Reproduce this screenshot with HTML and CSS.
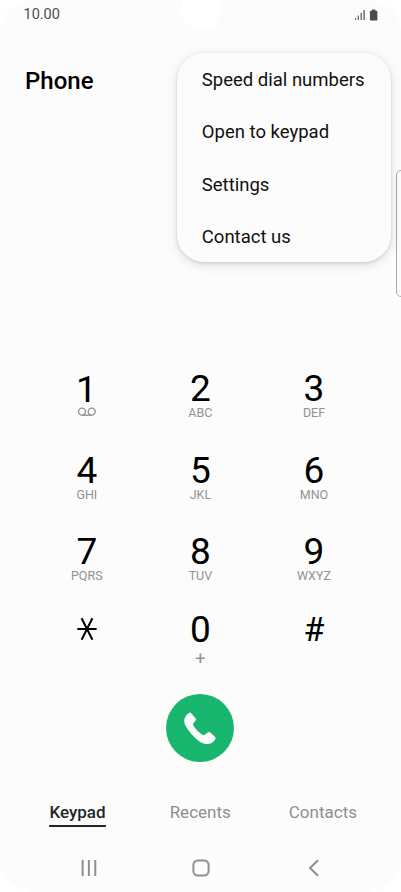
FILE: index.html
```html
<!DOCTYPE html>
<html lang="en">
<head>
<meta charset="utf-8">
<meta name="viewport" content="width=device-width, initial-scale=1">
<title>Phone</title>
<link rel="stylesheet" href="styles.css">
</head>
<body>
<div class="phone">
  <div class="notch"></div>
  <header class="status">
    <span class="clock">10.00</span>
    <svg class="status-icons" width="26" height="14" viewBox="0 0 26 14">
      <g fill="#777"><rect x="1" y="10" width="1.2" height="2"/><rect x="3.6" y="7.5" width="1.4" height="4.5"/><rect x="6.5" y="4.7" width="1.5" height="7.3"/><rect x="9.3" y="2" width="1.6" height="10"/></g>
      <path fill="#4b4b4b" d="M18 1.4h3.400v1.300h1.100q.9 0 .9.9v8q0 .9-.9.9h-5.700q-.9 0-.9-.9v-8q0-.9.9-.9H18z"/>
    </svg>
  </header>
  <h1 class="title">Phone</h1>
  <main class="keypad">
    <div class="key"><span class="digit one">1</span>
      <svg class="voicemail" width="20" height="10" viewBox="0 0 20 10" fill="none" stroke="#929292" stroke-width="1.400"><circle cx="5" cy="4.600" r="3.500"/><circle cx="14.700" cy="4.600" r="3.500"/><path d="M5 8.200h9.700"/></svg>
    </div>
    <div class="key"><span class="digit">2</span><span class="letters">ABC</span></div>
    <div class="key"><span class="digit">3</span><span class="letters">DEF</span></div>
    <div class="key"><span class="digit">4</span><span class="letters">GHI</span></div>
    <div class="key"><span class="digit">5</span><span class="letters">JKL</span></div>
    <div class="key"><span class="digit">6</span><span class="letters">MNO</span></div>
    <div class="key"><span class="digit">7</span><span class="letters">PQRS</span></div>
    <div class="key"><span class="digit">8</span><span class="letters">TUV</span></div>
    <div class="key"><span class="digit">9</span><span class="letters">WXYZ</span></div>
    <div class="key">
      <svg class="star" width="20" height="24" viewBox="0 0 20 24" fill="none" stroke="#000" stroke-width="2"><path d="M.4 12h19.200M4.600 1.200l10.800 21.600M15.400 1.200L4.600 22.800"/></svg>
    </div>
    <div class="key"><span class="digit">0</span><span class="plus">+</span></div>
    <div class="key"><span class="hash">#</span></div>
  </main>
  <button class="call" aria-label="Call">
    <svg width="68" height="68" viewBox="0 0 68 68"><path fill="#fcfcfc" d="M22.800 18.900Q24.100 18.100 25.200 19.200L29.600 24.200Q30.500 25.500 29.500 26.700L26.900 29.900Q27.700 33 31.400 36.800T37.900 41.300L41.500 38.700Q42.900 37.600 44.200 38.600L49.200 43Q50.100 44.200 49.100 45.400Q45.300 51.200 38.500 49.700C33.300 48.500 27.800 43.200 23.200 37.200C19 31.800 17.600 28 18.400 24.700Q19.300 20.800 22.800 18.900Z"/></svg>
  </button>
  <nav class="tabs">
    <span class="tab active">Keypad</span>
    <span class="tab">Recents</span>
    <span class="tab">Contacts</span>
  </nav>
  <footer class="navbar">
    <svg width="20" height="20" viewBox="0 0 20 20" fill="none" stroke="#8e8e8e" stroke-width="2"><path d="M4.600 2v16M10.900 2v16M17.300 2v16"/></svg>
    <svg width="20" height="20" viewBox="0 0 20 20" fill="none" stroke="#8e8e8e" stroke-width="2"><rect x="2.400" y="2.400" width="15.200" height="15.200" rx="4.500"/></svg>
    <svg width="20" height="20" viewBox="0 0 20 20" fill="none" stroke="#8e8e8e" stroke-width="2"><path d="M14 2.200L6 10l8 7.800"/></svg>
  </footer>
  <div class="edge-handle"></div>
  <ul class="menu">
    <li>Speed dial numbers</li>
    <li>Open to keypad</li>
    <li>Settings</li>
    <li>Contact us</li>
  </ul>
</div>
</body>
</html>
```
FILE: styles.css
```css
* { box-sizing: border-box; }
body { margin: 0; background: #fff; font-family: Roboto, "Liberation Sans", sans-serif; }
.phone {
  position: relative;
  width: 401px;
  height: 892px;
  overflow: hidden;
  display: flex;
  flex-direction: column;
  background: #fcfcfc;
  border-radius: 32px;
}
.notch {
  position: absolute;
  left: 181px;
  top: -10px;
  width: 39px;
  height: 40px;
  border-radius: 20px;
  background: #fff;
}
.status {
  height: 30px;
  padding: 0 21px 0 23.500px;
  display: flex;
  justify-content: space-between;
  align-items: center;
}
.clock { font-size: 14.500px; line-height: 30px; color: #4f4f4f; }
.title { margin: 36px 0 0 25px; font-size: 24px; line-height: 30px; font-weight: 500; color: #000; }
.keypad {
  margin: 273px 30px 0;
  display: grid;
  grid-template-columns: repeat(3, 113.600px);
  grid-template-rows: 81.500px 81.500px 78px 70px;
}
.key { display: flex; flex-direction: column; align-items: center; color: #000; }
.digit { font-size: 37px; line-height: 39px; }
.one { margin: 1px 0 -1px -1px; }
.letters { margin-top: -1px; font-size: 12.500px; line-height: 11px; color: #929292; }
.voicemail { margin-top: -1px; }
.star { margin-top: 6.500px; }
.hash { font-size: 34px; line-height: 38px; }
.plus { font-size: 18px; line-height: 19px; color: #929292; }
.call {
  width: 68px;
  height: 68px;
  margin: 14px 0 0 166.300px;
  padding: 0;
  border: 0;
  border-radius: 50%;
  background: #18b66e;
}
.call svg { display: block; }
.tabs {
  margin: 40px 0 0 16.200px;
  height: 26px;
  display: grid;
  grid-template-columns: repeat(3, 122.700px);
  justify-items: center;
}
.tab { font-size: 17px; line-height: 20px; color: #8e8e8e; }
.active { height: 24.500px; font-weight: 500; color: #252525; border-bottom: 2.500px solid #252525; border-radius: 1px; }
.navbar { margin: 30px 77px 0 78px; display: flex; justify-content: space-between; }
.edge-handle {
  position: absolute;
  left: 396px;
  top: 170px;
  width: 12px;
  height: 127px;
  border: 1px solid #aaa;
  border-radius: 5px;
  background: #fcfcfc;
}
.menu {
  position: absolute;
  left: 176.500px;
  top: 52.500px;
  width: 214px;
  height: 209.500px;
  margin: 0;
  padding: 1px 0 0 25.300px;
  list-style: none;
  border-radius: 27px;
  background: #fcfcfc;
  box-shadow: 0 1px 3px rgba(0, 0, 0, .13), 0 3px 12px rgba(0, 0, 0, .12);
}
.menu li { height: 52.500px; line-height: 53px; font-size: 18.500px; color: #101010; white-space: nowrap; }
```
